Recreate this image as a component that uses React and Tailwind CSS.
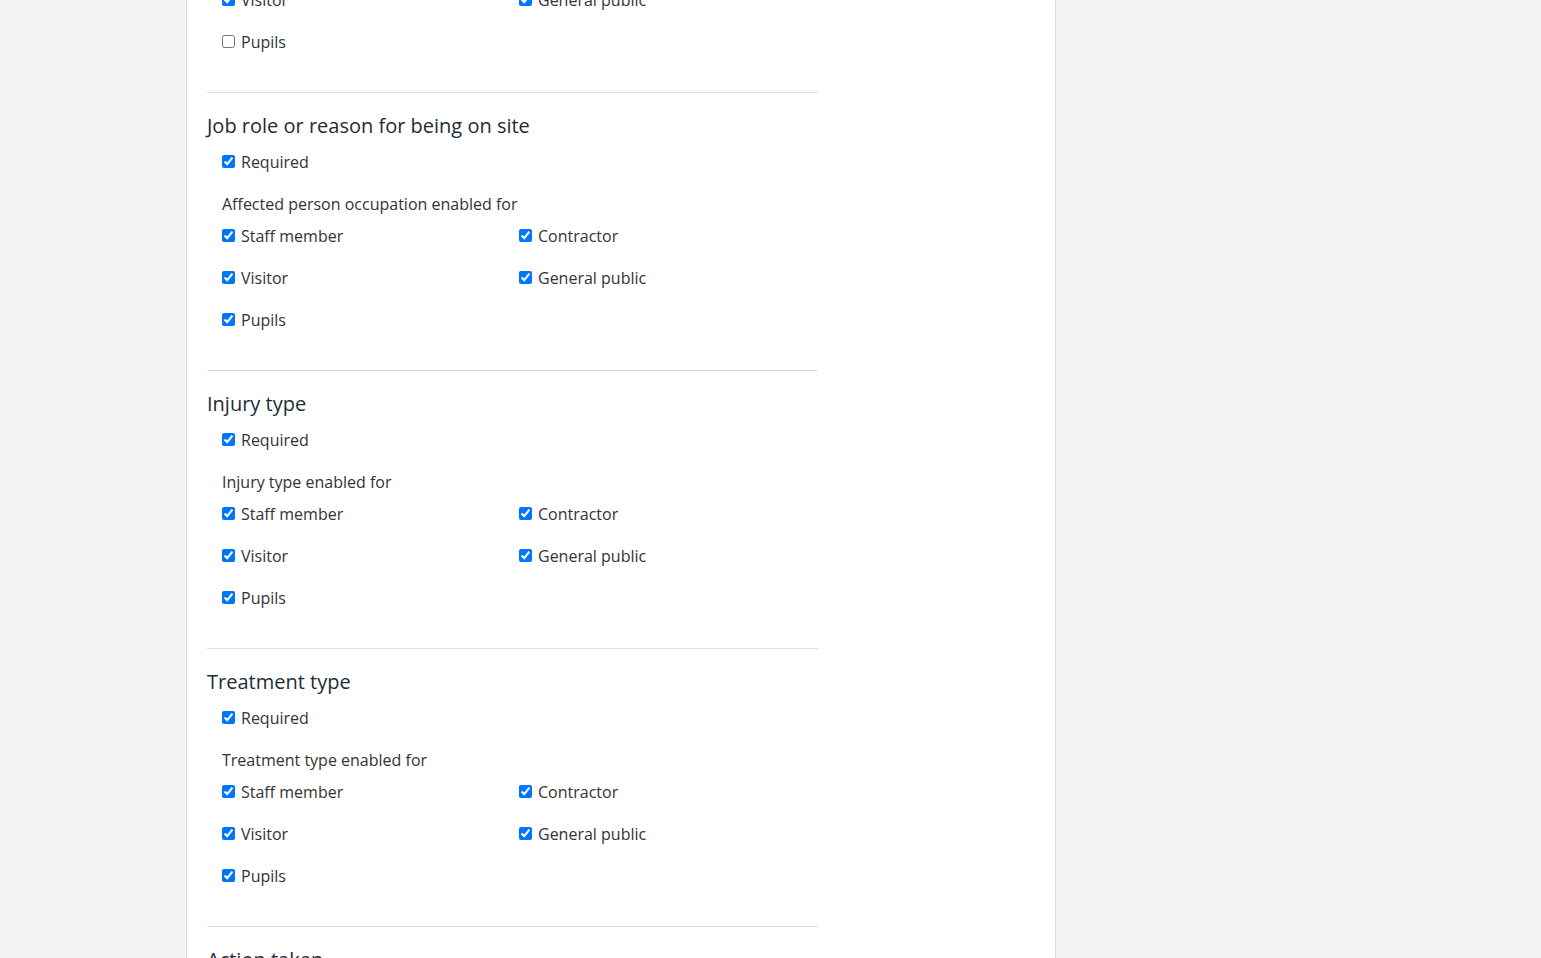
import React from "react";

const roles = [
  ["Staff member", "Contractor"],
  ["Visitor", "General public"],
  ["Pupils"],
];

const sections = [
  { title: "Affected person", label: "Affected person enabled for", pupils: false },
  { title: "Job role or reason for being on site", label: "Affected person occupation enabled for", pupils: true },
  { title: "Injury type", label: "Injury type enabled for", pupils: true },
  { title: "Treatment type", label: "Treatment type enabled for", pupils: true },
  { title: "Action taken", label: "Action taken enabled for", pupils: true },
];

const Check = ({ label, checked }) => (
  <label className="flex items-center h-[24px] gap-[6px] text-[16px] text-[#333333]">
    <input
      type="checkbox"
      defaultChecked={checked}
      className="m-0 w-[13px] h-[13px]"
    />
    <span className="pt-[1px]">{label}</span>
  </label>
);

const Section = ({ title, label, pupils }) => (
  <div className="pt-[20px]">
    <h3 className="h-[24px] leading-[26px] text-[20px] text-[#1e2d36]">{title}</h3>
    <div className="pl-[15px]">
      <div className="mt-[12px]">
        <Check label="Required" checked />
      </div>
      <p className="mt-[18px] h-[24px] leading-[26px] text-[16px] text-[#333333]">{label}</p>
      <div className="mt-[8px] grid grid-cols-[297px_1fr] gap-y-[18px]">
        {roles.flat().map((r) => (
          <Check key={r} label={r} checked={r === "Pupils" ? pupils : true} />
        ))}
      </div>
    </div>
    <hr className="mt-[39px] border-0 border-t border-[#dddddd]" />
  </div>
);

const App = () => {
  return (
    <div
      className="h-screen overflow-hidden bg-[#f3f3f3]"
      style={{ fontFamily: '"Open Sans", "Noto Sans", sans-serif' }}
    >
      <div className="ml-[186px] w-[870px] h-full bg-white border-x border-[#dcdcdc] overflow-hidden">
        <div className="-mt-[185px] ml-[20px] w-[611px]">
          {sections.map((s) => (
            <Section key={s.title} {...s} />
          ))}
        </div>
      </div>
    </div>
  );
};

export default App;
